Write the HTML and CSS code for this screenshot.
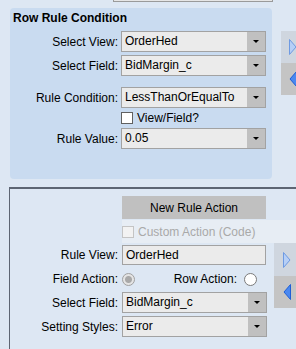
FILE: index.html
```html
<!DOCTYPE html>
<html lang="en">
<head>
    <meta charset="UTF-8">
    <title>Row Rule</title>
    <link rel="stylesheet" href="styles.css">
</head>
<body>
    <div class="stub"></div>

    <div class="upper">
        <section class="panel">
            <h3 class="panel-title">Row Rule Condition</h3>

            <div class="row row-first">
                <span class="label">Select View:</span>
                <div class="combo"><span class="value">OrderHed</span><span class="arrow"></span></div>
            </div>
            <div class="row row-tight">
                <span class="label">Select Field:</span>
                <div class="combo"><span class="value">BidMargin_c</span><span class="arrow"></span></div>
            </div>
            <div class="row row-cond">
                <span class="label">Rule Condition:</span>
                <div class="combo"><span class="value">LessThanOrEqualTo</span><span class="arrow"></span></div>
            </div>
            <div class="row row-check">
                <span class="label"></span>
                <label class="check"><span class="box"></span>View/Field?</label>
            </div>
            <div class="row row-value">
                <span class="label">Rule Value:</span>
                <div class="combo"><span class="value">0.05</span><span class="arrow"></span></div>
            </div>
        </section>

        <div class="nav nav-top">
            <div class="nav-btn nav-next">
                <svg width="8" height="16" viewBox="0 0 8 16"><polygon points="0.5,0.5 7,8 0.5,15.5" fill="#b6cff6" stroke="#6e9ae2"/></svg>
            </div>
            <div class="nav-btn nav-prev">
                <svg width="8" height="16" viewBox="0 0 8 16"><polygon points="7.5,0.5 1,8 7.5,15.5" fill="#4a88f0" stroke="#1f5fd6"/></svg>
            </div>
        </div>
    </div>

    <section class="action">
        <div class="action-form">
            <div class="row row-button">
                <span class="label"></span>
                <button class="action-btn">New Rule Action</button>
            </div>
            <div class="row row-custom">
                <span class="label"></span>
                <label class="check disabled"><span class="box"></span>Custom Action (Code)</label>
            </div>
            <div class="row row-view">
                <span class="label">Rule View:</span>
                <div class="text-field">OrderHed</div>
            </div>
            <div class="row row-radio">
                <span class="label">Field Action:</span>
                <div class="radios">
                    <span class="radio selected"></span>
                    <span class="radio-label">Row Action:</span>
                    <span class="radio"></span>
                </div>
            </div>
            <div class="row row-field">
                <span class="label">Select Field:</span>
                <div class="combo"><span class="value">BidMargin_c</span><span class="arrow"></span></div>
            </div>
            <div class="row row-tight">
                <span class="label">Setting Styles:</span>
                <div class="combo"><span class="value">Error</span><span class="arrow"></span></div>
            </div>
        </div>

        <div class="nav nav-bottom">
            <div class="nav-btn nav-next">
                <svg width="8" height="16" viewBox="0 0 8 16"><polygon points="0.5,0.5 7,8 0.5,15.5" fill="#b6cff6" stroke="#6e9ae2"/></svg>
            </div>
            <div class="nav-btn nav-prev">
                <svg width="8" height="16" viewBox="0 0 8 16"><polygon points="7.5,0.5 1,8 7.5,15.5" fill="#4a88f0" stroke="#1f5fd6"/></svg>
            </div>
        </div>
    </section>
</body>
</html>
```

FILE: styles.css
```css
body {
    margin: 0;
    width: 296px;
    height: 349px;
    overflow: hidden;
    background-color: #dde7f3;
    font-family: "Liberation Sans", Arial, sans-serif;
    font-size: 12px;
    color: #000;
}
.stub {
    margin-left: 113px;
    width: 158px;
    height: 1px;
    border: 1px solid #9a9a9a;
    border-top: none;
    background-color: #e6e6e6;
}
.upper {
    display: flex;
    margin-top: 6px;
}
.panel {
    flex: none;
    margin-left: 10px;
    width: 262px;
    height: 171px;
    background-color: #c9dbf0;
    border-radius: 4px;
}
.panel-title {
    margin: 0;
    padding: 3px 0 0 3px;
    font-size: 12px;
    line-height: 14px;
    font-weight: bold;
}
.row {
    display: flex;
    align-items: center;
}
.label {
    flex: none;
    width: 111px;
    padding-right: 3px;
    box-sizing: border-box;
    text-align: right;
    white-space: nowrap;
}
.row-first { margin-top: 6px; }
.row-tight { margin-top: 3px; }
.row-cond { margin-top: 11px; }
.row-check { margin-top: 3px; height: 13px; }
.row-value { margin-top: 4px; }

.combo {
    display: flex;
    width: 145px;
    height: 21px;
    box-sizing: border-box;
    border: 1px solid #a2a2a2;
    background-color: #ebebeb;
}
.combo .value {
    flex: 1;
    padding-left: 3px;
    line-height: 19px;
    white-space: nowrap;
    overflow: hidden;
}
.combo .arrow {
    position: relative;
    width: 18px;
    background-color: #c0c0c0;
}
.combo .arrow::after {
    content: "";
    position: absolute;
    left: 6px;
    top: 8px;
    border-left: 3px solid transparent;
    border-right: 3px solid transparent;
    border-top: 3px solid #000;
}
.check {
    display: flex;
    align-items: center;
    white-space: nowrap;
}
.check .box {
    width: 12px;
    height: 12px;
    box-sizing: border-box;
    border: 1px solid #606060;
    background-color: #fff;
    margin-right: 4px;
}
.check.disabled {
    color: #a9a9a9;
}
.check.disabled .box {
    border-color: #c4c4c4;
    background-color: #f2f2f2;
}

.nav {
    flex: none;
    width: 22px;
}
.nav-top {
    margin-left: 9px;
    margin-top: 23px;
}
.nav-btn {
    display: flex;
    align-items: center;
    height: 32px;
    padding-left: 8px;
}
.nav-next {
    background-color: #cfd6df;
}
.nav-prev {
    background-color: #c4c4c4;
}

.action {
    display: flex;
    margin-top: 8px;
    margin-left: 9px;
    border-top: 2px solid #5d6573;
    border-left: 1px solid #5d6573;
    padding-left: 1px;
    height: 160px;
    overflow: hidden;
}
.action-form {
    flex: none;
    width: 256px;
}
.action .label {
    padding-right: 4px;
}
.row-button { margin-top: 7px; }
.action-btn {
    width: 144px;
    height: 23px;
    padding: 0;
    border: none;
    background-color: #c0c0c0;
    font-family: inherit;
    font-size: 12px;
    color: #000;
}
.row-custom {
    margin-top: 1px;
    height: 23px;
}
.row-custom .check {
    align-self: stretch;
    flex: 1;
    margin-right: -40px;
    background-color: #e7edf4;
}
.row-view { margin-top: 2px; }
.text-field {
    width: 144px;
    height: 20px;
    box-sizing: border-box;
    border: 1px solid #a2a2a2;
    background-color: #ebebeb;
    padding-left: 3px;
    line-height: 18px;
}
.row-radio {
    margin-top: 7px;
    height: 14px;
}
.radios {
    display: flex;
    align-items: center;
    width: 135px;
}
.radio {
    width: 13px;
    height: 13px;
    box-sizing: border-box;
    border: 1px solid #7a7a7a;
    border-radius: 50%;
    background-color: #fff;
}
.radio.selected {
    border-color: #a0a0a0;
    background: radial-gradient(circle, #a8a8a8 0 3px, #e4e4e4 4px);
}
.radio-label {
    flex: 1;
    text-align: right;
    padding-right: 7px;
}
.row-field { margin-top: 6px; }
.nav-bottom {
    margin-left: 7px;
    margin-top: 54px;
}
.nav-bottom .nav-btn {
    padding-left: 9px;
}
.nav-bottom .nav-next {
    height: 33px;
}
```
